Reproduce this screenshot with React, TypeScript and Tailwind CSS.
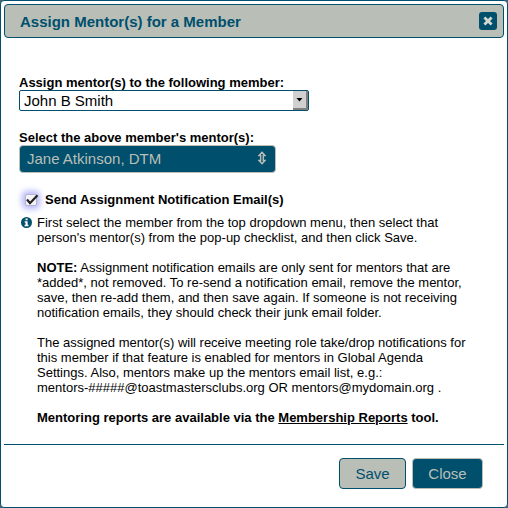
import React, { useState } from 'react';

const members = ['John B Smith', 'Jane Atkinson, DTM'];

const CloseIcon = () => (
   <svg viewBox="0 0 10 10" className="w-[10px] h-[10px]" aria-hidden="true">
      <path d="M2.4 2.4 L7.6 7.6 M7.6 2.4 L2.4 7.6" stroke="currentColor" strokeWidth="2.8" strokeLinecap="square" fill="none" />
   </svg>
);

const InfoIcon = () => (
   <svg viewBox="0 0 11 11" className="w-[11px] h-[11px] shrink-0 mt-0.5" aria-hidden="true">
      <circle cx="5.5" cy="5.5" r="5.5" fill="#004f6d" />
      <path d="M4.5 1.4 H6.6 V3.3 H4.5 Z M3.6 4.2 H6.6 V7.8 H7.5 V9.2 H3.6 V7.8 H4.5 V5.6 H3.6 Z" fill="#fff" />
   </svg>
);

const UpDownIcon = () => (
   <svg viewBox="0 0 8 14" className="w-2 h-[14px]" aria-hidden="true">
      <path d="M4 1.2 L7 4.5 H5.3 V9.5 H7 L4 12.8 L1 9.5 H2.7 V4.5 H1 Z" fill="none" stroke="currentColor" strokeWidth="1.4" />
   </svg>
);

const MemberSelect = () => (
   <div className="relative w-[290px] max-w-full">
      <select
         id="member"
         className="block w-full h-[21px] appearance-none rounded-xs border border-[#004f6d] bg-white pl-1 pr-5 text-[15px] leading-[19px] text-black"
      >
         {members.map((member) => (
            <option key={member}>{member}</option>
         ))}
      </select>
      <span className="pointer-events-none absolute top-px bottom-px right-px w-[15px] flex items-center justify-center bg-[#d0d0d0] border-r-2 border-b-2 border-[#808080]">
         <svg viewBox="0 0 7 4" className="w-[7px] h-1" aria-hidden="true">
            <path d="M0.5 0 H6.5 L3.5 3.5 Z" fill="#000" />
         </svg>
      </span>
   </div>
);

export default function App() {
   const [notify, setNotify] = useState(true);

   return (
      <div className="min-h-screen bg-[#53636b] font-['Liberation_Sans',Arial,sans-serif] text-[13px] leading-[15px] text-black">
         <div role="dialog" aria-labelledby="dialog-title" className="min-h-screen flex flex-col rounded-[4px] border border-[#004f6d] bg-white p-[3px]">
            <div className="h-[34px] flex items-center justify-between rounded-[4px] border border-[#004f6d] bg-[#b9bfb7] pl-[15px] pr-[6px] text-[#004f6d]">
               <h1 id="dialog-title" className="text-[15px] font-bold">Assign Mentor(s) for a Member</h1>
               <button type="button" aria-label="Close dialog" className="w-[18px] h-[18px] flex items-center justify-center rounded-[3px] bg-[#004f6d] text-[#d3d8d1]">
                  <CloseIcon />
               </button>
            </div>

            <div className="grow pl-[15px] pr-8 pt-[37px] pb-[19px]">
               <label htmlFor="member" className="block font-bold">Assign mentor(s) to the following member:</label>
               <MemberSelect />

               <label htmlFor="mentors" className="mt-[19px] block font-bold">Select the above member's mentor(s):</label>
               <button
                  id="mentors"
                  type="button"
                  aria-haspopup="listbox"
                  className="w-[257px] h-7 flex items-center justify-between rounded-[4px] border border-[#b9bfb7] bg-[#004f6d] pl-[7px] pr-[9px] pb-[2px] text-[15px] text-[#b9bfb7]"
               >
                  Jane Atkinson, DTM
                  <UpDownIcon />
               </button>

               <label className="mt-[19px] flex items-center gap-2 pl-[6px] font-bold">
                  <span className="relative flex">
                     <input
                        type="checkbox"
                        checked={notify}
                        onChange={(e) => setNotify(e.target.checked)}
                        className="w-3 h-3 appearance-none rounded-xs border border-[#b5b5c5] bg-[#f4f4f8] shadow-[0_0_6px_3px_#b4b4ff]"
                     />
                     {notify && (
                        <svg viewBox="0 0 14 12" className="pointer-events-none absolute top-0 left-0 w-[14px] h-3" aria-hidden="true">
                           <path d="M2 5.5 L5 9.2 L12.5 1.2" fill="none" stroke="#222" strokeWidth="2.2" />
                        </svg>
                     )}
                  </span>
                  Send Assignment Notification Email(s)
               </label>

               <div className="mt-2 flex gap-[5px] pl-[2px]">
                  <InfoIcon />
                  <div className="flex flex-col gap-[15px]">
                     <p>
                        First select the member from the top dropdown menu, then select that person's mentor(s) from the pop-up checklist, and then click Save.
                     </p>
                     <p>
                        <b>NOTE:</b> Assignment notification emails are only sent for mentors that are *added*, not removed. To re-send a notification email, remove the mentor, save, then re-add them, and then save again. If someone is not receiving notification emails, they should check their junk email folder.
                     </p>
                     <p>
                        The assigned mentor(s) will receive meeting role take/drop notifications for this member if that feature is enabled for mentors in Global Agenda Settings. Also, mentors make up the mentors email list, e.g.: <span className="whitespace-nowrap">mentors-#####@toastmastersclubs.org</span> OR mentors@mydomain.org .
                     </p>
                     <p className="font-bold">
                        Mentoring reports are available via the <a href="#reports" className="underline">Membership Reports</a> tool.
                     </p>
                  </div>
               </div>
            </div>

            <div className="flex justify-end gap-[6px] border-t border-[#004f6d] pt-[13px] pb-[15px] pr-[21px] text-[15px]">
               <button type="button" className="w-[67px] h-[31px] rounded-[4px] border border-[#004f6d] bg-[#b9bfb7] text-[#004f6d]">Save</button>
               <button type="button" className="w-[71px] h-[31px] rounded-[4px] border border-[#b9bfb7] bg-[#004f6d] text-[#b9bfb7]">Close</button>
            </div>
         </div>
      </div>
   );
}
